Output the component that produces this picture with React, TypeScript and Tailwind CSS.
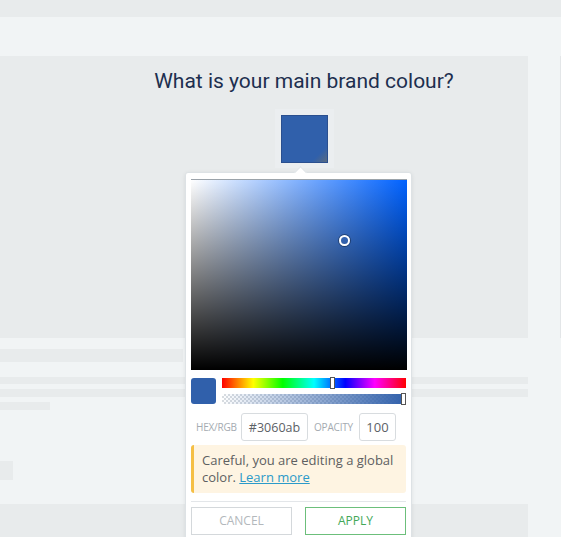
import { useState } from "react";

const HUE_GRADIENT =
  "linear-gradient(to right, #ff0000 0%, #ffff00 17%, #00ff00 33%, #00ffff 50%, #0000ff 67%, #ff00ff 83%, #ff0000 100%)";

function ColorPicker() {
  const [hex, setHex] = useState("#3060ab");
  const [opacity, setOpacity] = useState("100");

  return (
    <div className="absolute left-[185px] top-[172px] w-[227px] rounded-t-[3px] border border-[#dde2e5] bg-white px-[5px] pt-[6px] pb-2 shadow-[0_1px_4px_rgba(0,0,0,0.08)]">
      {/* arrow */}
      <div className="absolute -top-[5px] left-[110px] h-[9px] w-[9px] rotate-45 border-l border-t border-[#dde2e5] bg-white" />

      {/* saturation / value area */}
      <div
        className="relative h-[191px] w-[216px] border-t border-[#9ba3aa]"
        style={{ background: "linear-gradient(to right, #ffffff, hsl(217, 100%, 50%))" }}
      >
        <div className="absolute inset-0 bg-gradient-to-b from-transparent to-black" />
        <div className="absolute left-[148px] top-[55px] h-[11px] w-[11px] rounded-full border-2 border-white shadow-[0_0_0_1px_rgba(0,0,0,0.35)]" />
      </div>

      {/* swatch + sliders */}
      <div className="mt-[8px] flex gap-[6px]">
        <div className="h-[26px] w-[25px] shrink-0 rounded-[3px] bg-[#3060ab]" />
        <div className="flex flex-1 flex-col gap-[6px]">
          <div className="relative h-[10px] w-[184px]" style={{ background: HUE_GRADIENT }}>
            <div className="absolute -top-[1px] left-[108px] h-[12px] w-[5px] border border-[#555] bg-white" />
          </div>
          <div
            className="relative h-[10px] w-[184px]"
            style={{
              backgroundImage:
                "linear-gradient(to right, rgba(48,96,171,0), rgba(48,96,171,1)), repeating-conic-gradient(#d9dde1 0% 25%, #ffffff 0% 50%)",
              backgroundSize: "100% 100%, 4px 4px",
            }}
          >
            <div className="absolute -top-[1px] right-0 h-[12px] w-[5px] border border-[#555] bg-white" />
          </div>
        </div>
      </div>

      {/* inputs */}
      <div className="mt-[9px] flex items-center font-['Open_Sans',sans-serif]">
        <span className="w-[50px] pl-[5px] text-[10px] uppercase tracking-[-0.02em] text-[#a4abb1]">HEX/RGB</span>
        <input
          value={hex}
          onChange={(e) => setHex(e.target.value)}
          className="h-[28px] w-[67px] rounded-[3px] border border-[#d8dcdf] px-[4px] text-center text-[12.5px] text-[#5c6166] outline-none"
        />
        <span className="w-[51px] text-center text-[10px] uppercase tracking-[-0.02em] text-[#a4abb1]">OPACITY</span>
        <input
          value={opacity}
          onChange={(e) => setOpacity(e.target.value)}
          className="h-[28px] w-[37px] rounded-[3px] border border-[#d8dcdf] text-center text-[13px] text-[#5c6166] outline-none"
        />
      </div>

      {/* warning */}
      <div className="mt-[4px] rounded-[3px] border-l-[3px] border-[#f5bf45] bg-[#fef4e2] pt-[7px] pb-[7px] pl-[8px] pr-2 font-['Open_Sans',sans-serif] text-[13px] leading-[17px] text-[#5d5f61]">
        Careful, you are editing a global color.{" "}
        <a href="#" className="text-[#2b9ac9] underline">
          Learn more
        </a>
      </div>

      <div className="mt-[8px] h-px bg-[#e3e6e9]" />

      {/* actions */}
      <div className="mt-[5px] flex justify-between font-['Open_Sans',sans-serif]">
        <button className="h-[28px] w-[101px] border border-[#d4d8db] bg-white text-[12px] uppercase text-[#b3b8bc]">
          Cancel
        </button>
        <button className="h-[28px] w-[101px] border border-[#6cbf7b] bg-white text-[12px] uppercase text-[#43a857]">
          Apply
        </button>
      </div>
    </div>
  );
}

export default function App() {
  return (
    <div className="relative h-[537px] w-[561px] overflow-hidden bg-[#f1f4f5] font-['Roboto',sans-serif]">
      <div className="h-[17px] bg-[#e8ebec]" />
      <div className="h-[39px]" />

      <div className="flex">
        <div className="h-[282px] w-[528px] bg-[#e8ebec] pl-[80px]">
          <div className="flex flex-col items-center">
            <h1 className="mt-[11px] text-[21px] leading-[28px] text-[#1d2f4f]">
              What is your main brand colour?
            </h1>
            <div className="mt-[14px] flex h-[59px] w-[59px] items-center justify-center bg-[#ebeef0]">
              <div className="relative h-[48px] w-[47px] overflow-hidden border border-[#2a4f8f] bg-[#3060ab]">
                <div className="absolute bottom-0 right-0 h-[16px] w-[16px] bg-[linear-gradient(135deg,transparent_50%,#5a6b80_100%)]" />
              </div>
            </div>
          </div>
        </div>
        <div className="flex-1 border-r border-[#e3e6e8]" />
      </div>

      {/* faded content below */}
      <div className="mt-[11px] h-[13px] w-[183px] bg-[#e8ebec]" />
      <div className="mt-[15px] h-[7px] w-[528px] bg-[#e8ebec]" />
      <div className="mt-[5px] h-[8px] w-[528px] bg-[#e8ebec]" />
      <div className="mt-[5px] h-[8px] w-[50px] bg-[#e8ebec]" />
      <div className="mt-[51px] h-[19px] w-[13px] bg-[#e8ebec]" />
      <div className="mt-[24px] h-[33px] w-[528px] bg-[#e8ebec]" />

      <ColorPicker />
    </div>
  );
}
